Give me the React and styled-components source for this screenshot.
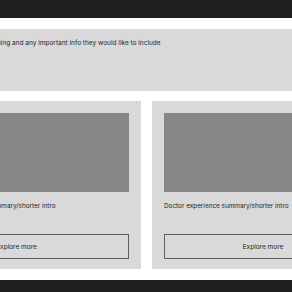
import React from "react";
import styled, { createGlobalStyle } from "styled-components";

const GlobalStyle = createGlobalStyle`
  html, body {
    margin: 0;
    padding: 0;
    background: #ffffff;
    overflow: hidden;
    font-family: Inter, "Noto Sans", sans-serif;
  }
`;

const Page = styled.div`
  width: 720px;
  margin-left: -81px;
  display: flex;
  flex-direction: column;
`;

const DarkBar = styled.div`
  height: ${(p) => p.$h}px;
  background: #1e1e1e;
`;

const Content = styled.main`
  display: flex;
  flex-direction: column;
  gap: 10px;
  padding: 11px 0;
`;

const InfoPanel = styled.section`
  height: 62px;
  box-sizing: border-box;
  background: #d9d9d9;
  padding: 10px 0 0 ${(p) => p.$indent}px;
  font-size: 6.5px;
  line-height: 8px;
  color: #262626;
  white-space: nowrap;
`;

const CardRow = styled.div`
  display: flex;
  gap: 11px;
`;

const Card = styled.article`
  width: 222px;
  height: 168px;
  box-sizing: border-box;
  background: #d9d9d9;
  padding: 12px 12px 10px;
  display: flex;
  flex-direction: column;
`;

const Photo = styled.div`
  height: 79px;
  background: #868686;
`;

const Summary = styled.p`
  margin: 10px 0 0;
  font-size: 6.4px;
  line-height: 8px;
  color: #262626;
  white-space: nowrap;
`;

const ExploreButton = styled.button`
  margin-top: auto;
  height: 25px;
  box-sizing: border-box;
  border: 1px solid #5e5e5e;
  background: transparent;
  display: flex;
  align-items: center;
  justify-content: center;
  padding: 0 ${(p) => p.$shift || 0}px 0 0;
  font-family: Inter, "Noto Sans", sans-serif;
  font-size: 6.5px;
  color: #262626;
`;

const doctors = [
  { id: 1, shift: 27 },
  { id: 2, shift: 0 },
  { id: 3, shift: 0 },
];

export default function App() {
  return (
    <>
      <GlobalStyle />
      <Page>
        <DarkBar $h={18} />
        <Content>
          <InfoPanel $indent={29}>
            Doctor bio, teaching and any important info they would like to include
          </InfoPanel>
          <CardRow>
            {doctors.map((d) => (
              <Card key={d.id}>
                <Photo />
                <Summary>Doctor experience summary/shorter intro</Summary>
                <ExploreButton $shift={d.shift}>Explore more</ExploreButton>
              </Card>
            ))}
          </CardRow>
        </Content>
        <DarkBar $h={12} />
      </Page>
    </>
  );
}
